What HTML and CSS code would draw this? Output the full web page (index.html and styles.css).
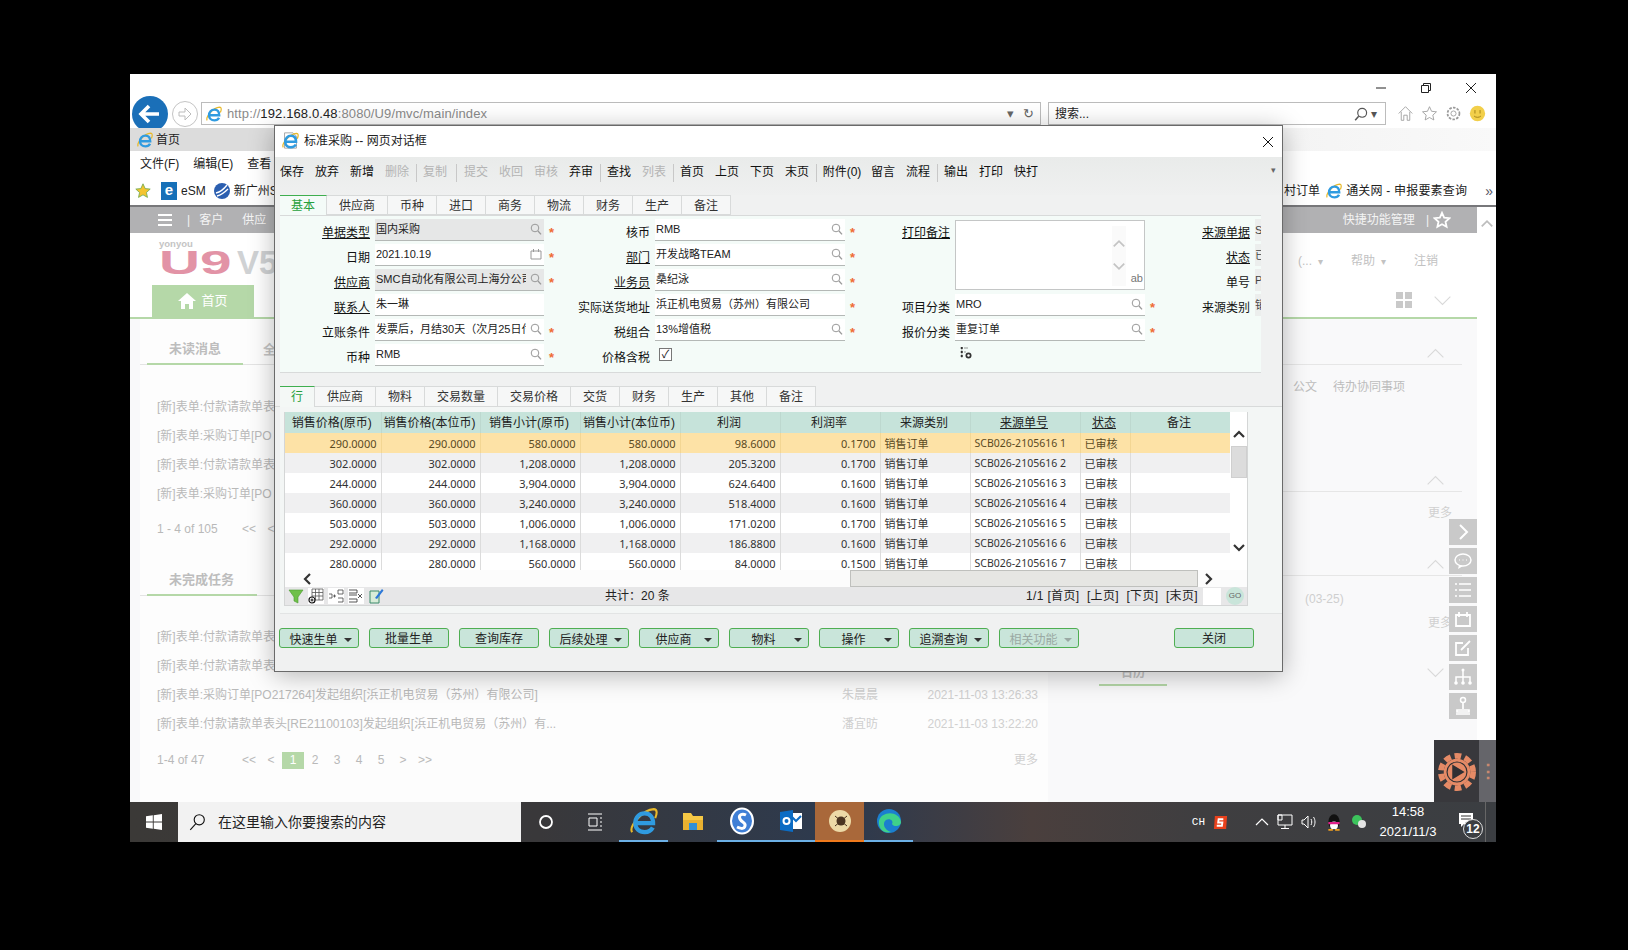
FILE: index.html
```html
<!DOCTYPE html>
<html lang="zh-CN">
<head>
<meta charset="utf-8">
<title>标准采购</title>
<link rel="stylesheet" href="styles.css">
</head>
<body>
<svg class="defs" aria-hidden="true">
  <defs>
    <symbol id="search" viewBox="0 0 12 12"><circle cx="5" cy="5" r="3.8" fill="none" stroke="currentColor"/><path d="M8 8l3 3.4" stroke="currentColor" stroke-width="1.3" fill="none"/></symbol>
    <symbol id="ie" viewBox="0 0 20 20"><path d="M1.500 18C-1 14 9 2 17 1.500c2.500 0 2.500 3 1 6.500" fill="none" stroke="#e8b92a" stroke-width="1.500"/><path d="M5 11.500h11.500C16.500 7 14 4.500 10.500 4.500 6.500 4.500 3.800 7.500 3.800 11.500s2.800 6.500 6.700 6.500c2.600 0 4.700-1.200 5.800-3.300" fill="none" stroke="#2f9be0" stroke-width="3"/></symbol>
    <symbol id="chev-up" viewBox="0 0 24 14"><path d="M2 12L12 2l10 10" fill="none" stroke="currentColor" stroke-width="1.4"/></symbol>
    <symbol id="chev-down" viewBox="0 0 24 14"><path d="M2 2l10 10L22 2" fill="none" stroke="currentColor" stroke-width="1.4"/></symbol>
  </defs>
</svg>
<div class="screen">
  <div class="caption">
    <svg class="cap-icon" viewBox="0 0 12 12"><path d="M1 6h10" stroke="#222"/></svg>
    <svg class="cap-icon" viewBox="0 0 12 12"><path d="M3.5 3.5V1.5h7v7h-2M1.500 3.500h7v7h-7z" fill="none" stroke="#222"/></svg>
    <svg class="cap-icon" viewBox="0 0 12 12"><path d="M1 1l10 10M11 1L1 11" stroke="#222"/></svg>
  </div>
  <div class="addr-row">
    <svg class="back" viewBox="0 0 36 36"><circle cx="18" cy="18" r="18" fill="#1a6fb8"/><path d="M27 18H10M17 10l-8 8 8 8" fill="none" stroke="#fff" stroke-width="3.600"/></svg>
    <svg class="forward" viewBox="0 0 26 26"><circle cx="13" cy="13" r="12.500" fill="#fff" stroke="#c4c4c4"/><path d="M7 11h6V7l6 6-6 6v-4H7z" fill="none" stroke="#bcbcbc"/></svg>
    <div class="addr">
      <svg class="addr-ie" viewBox="0 0 20 20"><use href="#ie"/></svg>
      <span class="url">http://<b>192.168.0.48</b>:8080/U9/mvc/main/index</span>
      <span class="addr-tail"><span>▾</span><span>↻</span></span>
    </div>
    <div class="search-box"><span>搜索...</span><span class="search-tail"><svg class="s14 flip" viewBox="0 0 12 12"><use href="#search"/></svg> ▾</span></div>
    <div class="ie-tools">
      <svg class="tool" viewBox="0 0 20 20"><path d="M2 10l8-8 8 8M5 8v10h3v-6h4v6h3V8" fill="none" stroke="#9a9a9a"/></svg>
      <svg class="tool" viewBox="0 0 20 20"><path d="M10 2l2.400 5.400 5.800.6-4.300 3.900 1.200 5.700-5.100-2.900-5.100 2.900 1.200-5.700L1.800 8l5.800-.6z" fill="none" stroke="#9a9a9a"/></svg>
      <svg class="tool" viewBox="0 0 20 20"><circle cx="10" cy="10" r="3" fill="none" stroke="#9a9a9a"/><circle cx="10" cy="10" r="7" fill="none" stroke="#9a9a9a" stroke-dasharray="3 1.500" stroke-width="2"/></svg>
      <svg class="tool" viewBox="0 0 20 20"><circle cx="10" cy="10" r="9" fill="#f2cf4a"/><path d="M7 6v4M13 6v4M6 13c2 2 6 2 8 0" stroke="#9a7a10" fill="none"/></svg>
    </div>
  </div>
  <div class="tab-row"><div class="ie-tab"><svg class="s16" viewBox="0 0 20 20"><use href="#ie"/></svg><span>首页</span></div></div>
  <div class="menu-row"><span>文件(F)</span><span>编辑(E)</span><span>查看</span></div>
  <div class="fav-row">
    <svg class="s16" viewBox="0 0 20 20"><path d="M10 1l2.700 6 6.300.6-4.700 4.300 1.300 6.100-5.600-3.200L4.400 18l1.300-6.100L1 7.600 7.300 7z" fill="#f4c430" stroke="#6aa84f"/></svg>
    <i class="esm">e</i><span class="fav-text">eSM</span>
    <svg class="s16 globe" viewBox="0 0 16 16"><circle cx="8" cy="8" r="8" fill="#2c5fb0"/><path d="M2 10c4-1 8-4 11-8M3 13c4-1 8-4 11-7" stroke="#fff" fill="none" stroke-width="1.300"/></svg>
    <span class="fav-text">新广州S</span>
    <span class="fav-spacer"></span>
    <span class="fav-text">村订单</span>
    <svg class="s16 fav-ie" viewBox="0 0 20 20"><use href="#ie"/></svg>
    <span class="fav-text wide">通关网 - 申报要素查询</span>
    <span class="fav-more">»</span>
  </div>

  <div class="page">
    <div class="page-main">
      <div class="topbar">
        <svg class="burger" viewBox="0 0 14 14"><path d="M0 2h14M0 7h14M0 12h14" stroke="#fff" stroke-width="2"/></svg>
        <span class="bar-sep">|</span><span>客户</span><span>供应</span>
        <span class="top-spacer"></span>
        <span>快捷功能管理</span><span class="bar-sep r">|</span>
        <svg class="s18" viewBox="0 0 20 20"><path d="M10 2l2.400 5.400 5.800.6-4.300 3.900 1.200 5.700-5.100-2.900-5.100 2.900 1.200-5.700L1.800 8l5.800-.6z" fill="none" stroke="#fff" stroke-width="2"/></svg>
      </div>
      <div class="logo-row">
        <div class="logo"><span class="yonyou">yonyou</span><span class="u9">U9</span><span class="v5">V5</span></div>
        <div class="user-menu"><span>(...<i class="mini">▾</i></span><span>帮助<i class="mini">▾</i></span><span>注销</span></div>
      </div>
      <div class="nav-row">
        <div class="home-tab"><svg class="s18" viewBox="0 0 18 18"><path d="M9 1l9 8h-3v8h-4v-5H7v5H3V9H0z" fill="#fff"/></svg><span>首页</span></div>
        <div class="nav-tools">
          <svg class="grid-ico" viewBox="0 0 16 16"><path d="M0 0h7v7H0zM9 0h7v7H9zM0 9h7v7H0zM9 9h7v7H9z" fill="#c9c9c9"/></svg>
          <svg class="chev" viewBox="0 0 24 14"><use href="#chev-down"/></svg>
        </div>
      </div>
      <div class="panels">
        <div class="left-panel">
          <div class="p-head"><span class="p-tab t1">未读消息</span><span class="p-tab2">全</span></div>
          <div class="p-list first">
            <div class="p-row"><span class="p-title">[新]表单:付款请款单表</span></div>
            <div class="p-row"><span class="p-title">[新]表单:采购订单[PO</span></div>
            <div class="p-row"><span class="p-title">[新]表单:付款请款单表</span></div>
            <div class="p-row"><span class="p-title">[新]表单:采购订单[PO</span></div>
          </div>
          <div class="pager"><span class="pg-info">1 - 4 of 105</span><span class="pg">&lt;&lt;</span><span class="pg">&lt;</span></div>
          <div class="p-head second"><span class="p-tab t2">未完成任务</span></div>
          <div class="p-list">
            <div class="p-row"><span class="p-title">[新]表单:付款请款单表</span></div>
            <div class="p-row"><span class="p-title">[新]表单:付款请款单表</span></div>
            <div class="p-row"><span class="p-title">[新]表单:采购订单[PO217264]发起组织[浜正机电贸易（苏州）有限公司]</span><span class="p-author">朱晨晨</span><span class="p-date">2021-11-03 13:26:33</span></div>
            <div class="p-row"><span class="p-title">[新]表单:付款请款单表头[RE21100103]发起组织[浜正机电贸易（苏州）有...</span><span class="p-author">潘宜昉</span><span class="p-date">2021-11-03 13:22:20</span></div>
          </div>
          <div class="pager second">
            <span class="pg-info">1-4 of 47</span><span class="pg">&lt;&lt;</span><span class="pg">&lt;</span><span class="pg on">1</span><span class="pg">2</span><span class="pg">3</span><span class="pg">4</span><span class="pg">5</span><span class="pg">&gt;</span><span class="pg">&gt;&gt;</span>
            <span class="pg-more">更多</span>
          </div>
        </div>
        <div class="right-panel">
          <div class="sec s1"><div class="sec-head"><svg class="chev" viewBox="0 0 24 14"><use href="#chev-up"/></svg></div><div class="sec-tags"><span>公文</span><span>待办协同事项</span></div></div>
          <div class="sec s2"><div class="sec-head"><svg class="chev" viewBox="0 0 24 14"><use href="#chev-up"/></svg></div><div class="sec-more">更多</div></div>
          <div class="sec s3"><div class="sec-head"><svg class="chev" viewBox="0 0 24 14"><use href="#chev-up"/></svg></div><div class="sec-date">(03-25)</div><div class="sec-more">更多</div></div>
          <div class="sec-cal"><span class="cal-tab">日历</span><svg class="chev" viewBox="0 0 24 14"><use href="#chev-down"/></svg></div>
        </div>
      </div>
    </div>
    <div class="page-scroll"><svg class="chev" viewBox="0 0 24 14"><path d="M3 12L12 3l9 9" fill="none" stroke="#bdbdbd" stroke-width="3"/></svg></div>
  </div>

  <div class="side-tools">
    <span class="side-btn"><svg viewBox="0 0 20 20"><path d="M7 3l7 7-7 7" fill="none" stroke="#fff" stroke-width="2"/></svg></span>
    <span class="side-btn"><svg viewBox="0 0 20 20"><ellipse cx="10" cy="9" rx="8" ry="6" fill="none" stroke="#fff" stroke-width="1.500"/><path d="M6 14l-1 4 5-3" fill="#fff"/><path d="M6 9h1M9.500 9h1M13 9h1" stroke="#fff"/></svg></span>
    <span class="side-btn"><svg viewBox="0 0 20 20"><path d="M2 4h2M6 4h12M2 10h2M6 10h12M2 16h2M6 16h12" stroke="#fff" stroke-width="1.500"/></svg></span>
    <span class="side-btn"><svg viewBox="0 0 20 20"><path d="M3 6h14v11H3zM6 3v5M14 3v5" fill="none" stroke="#fff" stroke-width="1.800"/></svg></span>
    <span class="side-btn"><svg viewBox="0 0 20 20"><path d="M10 5H3v12h12v-7M8 12l9-9" fill="none" stroke="#fff" stroke-width="1.800"/></svg></span>
    <span class="side-btn"><svg viewBox="0 0 20 20"><path d="M10 3v7M3 16v-6h14v6M10 10v6" fill="none" stroke="#fff" stroke-width="1.500"/><circle cx="10" cy="3" r="1.500" fill="#fff"/><circle cx="3" cy="16" r="1.800" fill="#fff"/><circle cx="10" cy="16" r="1.800" fill="#fff"/><circle cx="17" cy="16" r="1.800" fill="#fff"/></svg></span>
    <span class="side-btn"><svg viewBox="0 0 20 20"><circle cx="10" cy="4" r="2.500" fill="none" stroke="#fff" stroke-width="1.500"/><path d="M10 7v6M4 14h12v2H4zM3 18h14" stroke="#fff" stroke-width="1.700" fill="none"/></svg></span>
  </div>

  <div class="rec">
    <svg class="rec-sun" viewBox="0 0 40 40"><circle cx="20" cy="20" r="17" fill="none" stroke="#e58a66" stroke-width="6" stroke-dasharray="7 4"/><circle cx="20" cy="20" r="14" fill="#e58a66"/><circle cx="20" cy="20" r="10.500" fill="none" stroke="#2f2f33" stroke-width="1.200"/><path d="M15 12l13 8-13 8z" fill="#2f2f33"/></svg>
    <span class="rec-strip">⋮</span>
  </div>

  <div class="taskbar">
    <div class="start"><svg class="s16" viewBox="0 0 16 16"><path d="M0 2.300l6.800-1v6.300H0zM7.700 1.200L16 0v7.600H7.700zM0 8.400h6.800v6.300L0 13.700zM7.700 8.400H16V16l-8.300-1.200z" fill="#fff"/></svg></div>
    <div class="tsearch"><svg class="s18 ts-ico" viewBox="0 0 16 16"><circle cx="10" cy="6" r="4.500" fill="none" stroke="#111"/><path d="M7 9.500L2 15" stroke="#111"/></svg><span>在这里输入你要搜索的内容</span></div>
    <div class="tb-sys"><svg class="s16" viewBox="0 0 16 16"><circle cx="8" cy="8" r="6" fill="none" stroke="#fff" stroke-width="1.800"/></svg></div>
    <div class="tb-sys"><svg class="s18" viewBox="0 0 18 18"><path d="M2 1h14M2 17h14M3 5h8v8H3zM14 5h2M14 9h2M14 13h2" fill="none" stroke="#fff"/></svg></div>
    <div class="tb-app run"><svg class="s28" viewBox="0 0 20 20"><use href="#ie"/></svg></div>
    <div class="tb-app"><svg class="s24" viewBox="0 0 24 24"><path d="M2 4h8l2 3h10v14H2z" fill="#f6c945"/><path d="M2 11h20v10H2z" fill="#e8b030"/><path d="M8 14h8v7H8z" fill="#2f8fd8"/></svg></div>
    <div class="tb-app run"><svg class="s28" viewBox="0 0 28 28"><ellipse cx="14" cy="14" rx="11" ry="12.500" fill="#3f7fd6" stroke="#fff" stroke-width="2"/><path d="M18 8c-4-2-8 0-6 4s6 3 5 7-6 2-8 1" fill="none" stroke="#fff" stroke-width="3"/></svg></div>
    <div class="tb-app run"><svg class="s24" viewBox="0 0 24 24"><path d="M10 4h13v16H10z" fill="#fff"/><path d="M13 8l4 4 5-5" fill="none" stroke="#0b6cc4" stroke-width="2"/><path d="M1 3l13-2v22L1 21z" fill="#0b6cc4"/><circle cx="7.500" cy="12" r="3" fill="none" stroke="#fff" stroke-width="2"/></svg></div>
    <div class="tb-app active"><svg class="s28" viewBox="0 0 28 28"><circle cx="14" cy="14" r="11" fill="#ecd9a6"/><circle cx="15" cy="14" r="4.500" fill="#4a3420"/><path d="M9 9l12 10M21 9L9 19" stroke="#4a3420"/></svg></div>
    <div class="tb-app run"><svg class="s28" viewBox="0 0 28 28"><circle cx="14" cy="14" r="12" fill="#1b7fcf"/><path d="M4 14C6 4 24 3 26 15c0 5-8 5-9 2 2-3-2-6-6-4-4 3-2 10 5 12C8 27 3 21 4 14z" fill="#3fd18a"/></svg></div>
    <span class="tb-spacer"></span>
    <span class="ch">CH</span>
    <svg class="tray-s" viewBox="0 0 16 16"><path d="M2 1h13l-1 14H1z" fill="#e8411c"/><path d="M11 4.500H6L5.500 8h4.500l-.5 3.500H4" fill="none" stroke="#fff" stroke-width="2"/></svg>
    <svg class="tray up" viewBox="0 0 14 14"><path d="M1 10l6-6 6 6" fill="none" stroke="#fff" stroke-width="1.200"/></svg>
    <svg class="tray" viewBox="0 0 16 16"><path d="M1 1h14v10H1zM8 11v3M4 14.500h8M1 1h4v5H1z" fill="none" stroke="#fff"/></svg>
    <svg class="tray" viewBox="0 0 16 16"><path d="M1 6h2l4-4v12l-4-4H1zM10 5c1 2 1 4 0 6M12.500 3c2 3 2 7 0 10" fill="none" stroke="#fff"/></svg>
    <svg class="tray qq" viewBox="0 0 16 16"><ellipse cx="8" cy="8" rx="5" ry="7" fill="#111"/><ellipse cx="8" cy="11" rx="3.500" ry="3.500" fill="#fff"/><path d="M3 8h10v2H3z" fill="#e0208a"/><path d="M3 15h4M9 15h4" stroke="#f0a020" stroke-width="1.500"/></svg>
    <svg class="tray" viewBox="0 0 16 16"><circle cx="6" cy="6" r="5" fill="#3cc35c"/><circle cx="11" cy="10" r="4" fill="#e4e4e4"/></svg>
    <div class="clock"><span>14:58</span><span>2021/11/3</span></div>
    <div class="notify"><svg class="s16" viewBox="0 0 16 16"><path d="M1 1h14v11H6l-3 3v-3H1z" fill="#fff"/><path d="M3 4h10M3 7h10" stroke="#333"/></svg><span class="notify-n">12</span></div>
  </div>

  <div class="dialog">
    <div class="d-title">
      <svg class="d-ie" viewBox="0 0 20 20"><path d="M3 1h10l4 4v14H3z" fill="#fff" stroke="#999"/><use href="#ie"/></svg>
      <span>标准采购 -- 网页对话框</span>
      <svg class="d-close" viewBox="0 0 12 12"><path d="M1 1l10 10M11 1L1 11" stroke="#111"/></svg>
    </div>
    <div class="toolbar">
      <span class="tb">保存</span><span class="tb">放弃</span><span class="tb">新增</span><span class="tb off">删除</span><i class="tb-sep"></i>
      <span class="tb off">复制</span><i class="tb-sep wide"></i><span class="tb off">提交</span><span class="tb off">收回</span><span class="tb off">审核</span><span class="tb">弃审</span><i class="tb-sep"></i>
      <span class="tb">查找</span><span class="tb off">列表</span><i class="tb-sep"></i>
      <span class="tb">首页</span><span class="tb">上页</span><span class="tb">下页</span><span class="tb">末页</span><i class="tb-sep"></i>
      <span class="tb att">附件(0)</span><span class="tb">留言</span><span class="tb">流程</span><i class="tb-sep"></i>
      <span class="tb">输出</span><span class="tb">打印</span><span class="tb">快打</span>
      <span class="tb-drop">▾</span>
    </div>
    <div class="tabs">
      <span class="tab on t-main">基本</span><span class="tab t-3">供应商</span><span class="tab">币种</span><span class="tab">进口</span><span class="tab">商务</span><span class="tab">物流</span><span class="tab">财务</span><span class="tab">生产</span><span class="tab">备注</span>
    </div>
    <div class="form">
      <label class="f-l"><u>单据类型</u></label><div class="f-i ro"><span>国内采购</span><svg class="mag" viewBox="0 0 12 12"><use href="#search"/></svg></div><span class="star">*</span>
      <label class="f-l">核币</label><div class="f-i"><span>RMB</span><svg class="mag" viewBox="0 0 12 12"><use href="#search"/></svg></div><span class="star">*</span>
      <label class="f-l"><u>打印备注</u></label>
      <div class="memo"><div class="memo-bar"><svg viewBox="0 0 24 14"><path d="M3 12l9-9 9 9" fill="none" stroke="#c4c4c4" stroke-width="3"/></svg><svg viewBox="0 0 24 14"><path d="M3 2l9 9 9-9" fill="none" stroke="#c4c4c4" stroke-width="3"/></svg></div><span class="memo-ab">ab</span></div><span></span>
      <label class="f-l"><u>来源单据</u></label><div class="f-i clip"><span>S</span></div>

      <label class="f-l">日期</label><div class="f-i"><span>2021.10.19</span><svg class="mag" viewBox="0 0 12 12"><path d="M1 3h10v8H1zM3.500 1v3M8.500 1v3" fill="none" stroke="currentColor"/></svg></div><span class="star">*</span>
      <label class="f-l"><u>部门</u></label><div class="f-i"><span>开发战略TEAM</span><svg class="mag" viewBox="0 0 12 12"><use href="#search"/></svg></div><span class="star">*</span>
      <label class="f-l c3-gap"></label>
      <label class="f-l c4"><u>状态</u></label><div class="f-i clip"><span>已</span></div>

      <label class="f-l"><u>供应商</u></label><div class="f-i ro"><span>SMC自动化有限公司上海分公司</span><svg class="mag" viewBox="0 0 12 12"><use href="#search"/></svg></div><span class="star">*</span>
      <label class="f-l"><u>业务员</u></label><div class="f-i"><span>桑纪泳</span><svg class="mag" viewBox="0 0 12 12"><use href="#search"/></svg></div><span class="star">*</span>
      <label class="f-l c3-gap"></label>
      <label class="f-l c4">单号</label><div class="f-i clip"><span>P</span></div>

      <label class="f-l"><u>联系人</u></label><div class="f-i"><span>朱一琳</span></div><span></span>
      <label class="f-l">实际送货地址</label><div class="f-i"><span>浜正机电贸易（苏州）有限公司</span></div><span class="star">*</span>
      <label class="f-l">项目分类</label><div class="f-i"><span>MRO</span><svg class="mag" viewBox="0 0 12 12"><use href="#search"/></svg></div><span class="star">*</span>
      <label class="f-l">来源类别</label><div class="f-i clip"><span>销</span></div>

      <label class="f-l">立账条件</label><div class="f-i"><span>发票后，月结30天（次月25日付款）</span><svg class="mag" viewBox="0 0 12 12"><use href="#search"/></svg></div><span class="star">*</span>
      <label class="f-l">税组合</label><div class="f-i"><span>13%增值税</span><svg class="mag" viewBox="0 0 12 12"><use href="#search"/></svg></div><span class="star">*</span>
      <label class="f-l">报价分类</label><div class="f-i"><span>重复订单</span><svg class="mag" viewBox="0 0 12 12"><use href="#search"/></svg></div><span class="star">*</span>
      <span></span><span></span>

      <label class="f-l">币种</label><div class="f-i"><span>RMB</span><svg class="mag" viewBox="0 0 12 12"><use href="#search"/></svg></div><span class="star">*</span>
      <label class="f-l">价格含税</label><div class="f-check"><span class="check">✓</span></div><span></span>
      <span></span><div class="f-tool"><svg class="s12" viewBox="0 0 12 12"><path d="M1 0h1.500v2H1zM4 1h4M1 4h1.500v2H1zM4 5h2M1 8h1.500v2H1z" fill="#333" stroke="#333" stroke-width=".5"/><circle cx="8.500" cy="8.500" r="3" fill="#333"/><circle cx="8.500" cy="8.500" r="1.200" fill="#fff"/></svg></div>
    </div>

    <div class="gtabs">
      <span class="gtab on g-1">行</span><span class="gtab g-3">供应商</span><span class="gtab">物料</span><span class="gtab g-4">交易数量</span><span class="gtab g-4">交易价格</span><span class="gtab">交货</span><span class="gtab">财务</span><span class="gtab">生产</span><span class="gtab">其他</span><span class="gtab">备注</span>
    </div>
    <div class="grid-panel">
      <div class="grid">
        <div class="grid-main">
          <div class="grid-body">
            <table class="tbl">
              <colgroup><col class="c96"><col class="c99"><col class="c100"><col class="c100"><col class="c100"><col class="c100"><col class="c90"><col class="c110"><col class="c50"><col class="c100"></colgroup>
              <thead><tr><th>销售价格(原币)</th><th>销售价格(本位币)</th><th>销售小计(原币)</th><th>销售小计(本位币)</th><th>利润</th><th>利润率</th><th>来源类别</th><th><u>来源单号</u></th><th><u>状态</u></th><th>备注</th></tr></thead>
              <tbody>
                <tr class="sel"><td class="n">290.0000</td><td class="n">290.0000</td><td class="n">580.0000</td><td class="n">580.0000</td><td class="n">98.6000</td><td class="n">0.1700</td><td class="t">销售订单</td><td class="t code">SCB026-2105616 1</td><td class="t">已审核</td><td></td></tr>
                <tr class="alt"><td class="n">302.0000</td><td class="n">302.0000</td><td class="n">1,208.0000</td><td class="n">1,208.0000</td><td class="n">205.3200</td><td class="n">0.1700</td><td class="t">销售订单</td><td class="t code">SCB026-2105616 2</td><td class="t">已审核</td><td></td></tr>
                <tr><td class="n">244.0000</td><td class="n">244.0000</td><td class="n">3,904.0000</td><td class="n">3,904.0000</td><td class="n">624.6400</td><td class="n">0.1600</td><td class="t">销售订单</td><td class="t code">SCB026-2105616 3</td><td class="t">已审核</td><td></td></tr>
                <tr class="alt"><td class="n">360.0000</td><td class="n">360.0000</td><td class="n">3,240.0000</td><td class="n">3,240.0000</td><td class="n">518.4000</td><td class="n">0.1600</td><td class="t">销售订单</td><td class="t code">SCB026-2105616 4</td><td class="t">已审核</td><td></td></tr>
                <tr><td class="n">503.0000</td><td class="n">503.0000</td><td class="n">1,006.0000</td><td class="n">1,006.0000</td><td class="n">171.0200</td><td class="n">0.1700</td><td class="t">销售订单</td><td class="t code">SCB026-2105616 5</td><td class="t">已审核</td><td></td></tr>
                <tr class="alt"><td class="n">292.0000</td><td class="n">292.0000</td><td class="n">1,168.0000</td><td class="n">1,168.0000</td><td class="n">186.8800</td><td class="n">0.1600</td><td class="t">销售订单</td><td class="t code">SCB026-2105616 6</td><td class="t">已审核</td><td></td></tr>
                <tr><td class="n">280.0000</td><td class="n">280.0000</td><td class="n">560.0000</td><td class="n">560.0000</td><td class="n">84.0000</td><td class="n">0.1500</td><td class="t">销售订单</td><td class="t code">SCB026-2105616 7</td><td class="t">已审核</td><td></td></tr>
              </tbody>
            </table>
          </div>
          <div class="vscroll">
            <svg class="v-arrow" viewBox="0 0 14 10"><path d="M2 8l5-5 5 5" fill="none" stroke="#333" stroke-width="2.200"/></svg>
            <div class="v-thumb"></div>
            <svg class="v-arrow down" viewBox="0 0 14 10"><path d="M2 2l5 5 5-5" fill="none" stroke="#333" stroke-width="2.200"/></svg>
          </div>
        </div>
        <div class="hscroll">
          <svg class="h-arrow" viewBox="0 0 10 14"><path d="M8 2L3 7l5 5" fill="none" stroke="#333" stroke-width="2.200"/></svg>
          <div class="h-thumb"></div>
          <svg class="h-arrow r" viewBox="0 0 10 14"><path d="M2 2l5 5-5 5" fill="none" stroke="#333" stroke-width="2.200"/></svg>
        </div>
        <div class="gfoot">
          <svg class="gf-ico" viewBox="0 0 16 16"><path d="M1 2h14L10 9v6l-4-2V9z" fill="#6fc04a" stroke="#4a9a30" stroke-width=".6"/></svg>
          <svg class="gf-ico w" viewBox="0 0 16 16"><path d="M4 1h11v11H4zM4 4.500h11M4 8h11M7.500 1v11M11 1v11" fill="none" stroke="#555" stroke-width=".8"/><circle cx="4" cy="12" r="3" fill="#fff" stroke="#111" stroke-width="1.200"/><path d="M2.500 12h3M4 10.500v3" stroke="#111"/></svg>
          <svg class="gf-ico w" viewBox="0 0 16 16"><path d="M1 6h3v4H1M10 2h5v4h-5zM10 10h5v4h-5M5 8h3M6.500 6.500v3" fill="none" stroke="#444" stroke-width=".8"/></svg>
          <svg class="gf-ico w" viewBox="0 0 16 16"><path d="M1 2h8v3H1M1 7h8M1 11h8v3H1M10 6l4 4M14 6l-4 4" fill="none" stroke="#444" stroke-width=".9"/></svg>
          <svg class="gf-ico" viewBox="0 0 16 16"><path d="M2 3h9v12H2z" fill="#d8ecd8" stroke="#3a8a6a"/><path d="M7 10L14 1l1.500 1.500L9 11z" fill="#2c78d8"/></svg>
          <span class="gf-total">共计：20 条</span>
          <span class="gf-pages">1/1 [首页]&nbsp;&nbsp;[上页]&nbsp;&nbsp;[下页]&nbsp;&nbsp;[末页]</span>
          <span class="gf-input"></span>
          <span class="gf-go">GO</span>
        </div>
      </div>
    </div>
    <div class="actions">
      <div class="btn drop"><span>快速生单</span><i class="caret"></i></div>
      <div class="btn"><span>批量生单</span></div>
      <div class="btn"><span>查询库存</span></div>
      <div class="btn drop"><span>后续处理</span><i class="caret"></i></div>
      <div class="btn drop"><span>供应商</span><i class="caret"></i></div>
      <div class="btn drop"><span>物料</span><i class="caret"></i></div>
      <div class="btn drop"><span>操作</span><i class="caret"></i></div>
      <div class="btn drop"><span>追溯查询</span><i class="caret"></i></div>
      <div class="btn drop dim"><span>相关功能</span><i class="caret"></i></div>
      <div class="btn close"><span>关闭</span></div>
    </div>
  </div>
</div>
</body>
</html>
```

FILE: styles.css
```css
* { box-sizing: border-box; }
html { background: #000; }
body {
  margin: 0;
  padding: 74px 0 0 130px;
  height: 950px;
  overflow: hidden;
  background: #000;
  color: #222;
  font: 12px/16px "Liberation Sans", "Noto Sans CJK SC", sans-serif;
}
i { font-style: normal; }
.defs { position: absolute; width: 0; height: 0; }
.s12 { width: 12px; height: 12px; }
.s14 { width: 14px; height: 14px; }
.s16 { width: 16px; height: 16px; }
.s18 { width: 18px; height: 18px; }
.s24 { width: 24px; height: 24px; }
.s28 { width: 28px; height: 28px; }
.flip { transform: scaleX(-1); }

.screen {
  position: relative;
  width: 1366px;
  height: 768px;
  background: #fff;
  overflow: hidden;
  display: flex;
  flex-direction: column;
}

/* browser chrome */
.caption { height: 28px; display: flex; justify-content: flex-end; align-items: center; gap: 33px; padding: 0 19px 0 0; }
.cap-icon { width: 12px; height: 12px; }
.addr-row { height: 23px; display: flex; align-items: center; padding-left: 2px; }
.back { width: 36px; height: 36px; flex: none; }
.forward { width: 26px; height: 26px; flex: none; margin-left: 4px; }
.addr {
  margin-left: 3px; width: 840px; height: 23px; border: 1px solid #bcbcbc; background: #fff;
  display: flex; align-items: center; padding: 0 6px 0 4px; color: #8a8a8a; font-size: 13px;
}
.addr-ie { width: 16px; height: 16px; }
.url { margin-left: 5px; letter-spacing: .12px; }
.url b { font-weight: 400; color: #222; }
.addr-tail { margin-left: auto; color: #666; display: flex; gap: 9px; }
.search-box {
  margin-left: 7px; width: 338px; height: 23px; border: 1px solid #bcbcbc; background: #fff;
  display: flex; align-items: center; justify-content: space-between; padding: 0 8px 0 6px; font-size: 12px;
}
.search-tail { display: flex; align-items: center; gap: 3px; color: #555; }
.ie-tools { display: flex; gap: 7px; margin-left: 11px; align-items: center; }
.tool { width: 17px; height: 17px; }

.tab-row { height: 23px; margin-top: 3px; background: linear-gradient(90deg, #dcdcdc 0, #dcdcdc 150px, #f4f4f4 1160px, #f9f9f9 100%); }
.ie-tab { display: flex; align-items: center; gap: 3px; padding: 1px 0 0 7px; height: 23px; }
.menu-row { height: 25px; display: flex; align-items: center; gap: 14px; padding-left: 10px; background: #fff; }
.fav-row {
  height: 29px; display: flex; align-items: center; padding-left: 5px; background: #fff;
  border-bottom: 0;
}
.esm { width: 16px; height: 18px; margin-left: 10px; background: #1670b8; color: #fff; font-weight: 700; text-align: center; font-size: 15px; line-height: 16px; }
.fav-text { margin-left: 4px; }
.fav-text.wide { letter-spacing: .2px; }
.globe { margin-left: 8px; }
.fav-spacer { flex: 1; }
.fav-ie { margin-left: 6px; }
.fav-more { margin: 0 3px 0 18px; color: #556; font-size: 14px; }

/* page behind the dialog */
.page { flex: 1; display: flex; background: #f9f9fa; border-top: 2px solid #77777a; min-height: 0; }
.page-main { width: 1347px; display: flex; flex-direction: column; }
.page-scroll { flex: 1; background: #fff; padding-top: 9px; text-align: center; }
.page-scroll .chev { width: 14px; height: 9px; }
.topbar { height: 26px; background: #b1b1b3; color: #f4f4f4; display: flex; align-items: center; gap: 19px; padding: 0 26px 0 28px; flex: none; }
.burger { width: 14px; height: 14px; }
.bar-sep { margin: 0 -10px 0 -4px; }
.bar-sep.r { margin: 0 -15px 0 -8px; }
.top-spacer { flex: 1; }
.logo-row { height: 52px; display: flex; justify-content: space-between; background: #fff; flex: none; }
.logo { position: relative; padding-left: 29px; display: flex; align-items: flex-end; height: 46px; }
.yonyou { position: absolute; left: 29px; top: 5px; font-size: 9.500px; font-weight: 700; color: #c4c4c4; line-height: 12px; }
.u9 { display: inline-block; font: 700 33px/33px "Liberation Sans", sans-serif; color: #e293a6; transform: scaleX(1.72); transform-origin: 0 50%; width: 78px; }
.v5 { font: 700 33px/33px "Liberation Sans", sans-serif; color: #d0d2d4; }
.user-menu { display: flex; gap: 28px; padding: 20px 39px 0 0; color: #c2c2c2; }
.mini { margin-left: 6px; font-size: 10px; }
.nav-row { height: 34px; display: flex; justify-content: space-between; background: #fff; border-bottom: 2px solid #b5d8a8; padding-left: 22px; flex: none; }
.home-tab { width: 102px; height: 32px; background: #b5d8a8; color: #fff; display: flex; align-items: center; justify-content: center; gap: 5px; font-size: 13px; }
.nav-tools { display: flex; align-items: center; gap: 21px; padding: 0 25px 2px 0; }
.grid-ico { width: 16px; height: 16px; }
.chev { width: 19px; height: 11px; color: #d9d9d9; }
.panels { flex: 1; display: flex; min-height: 0; }
.left-panel { width: 908px; margin-left: 10px; background: #fdfdfd; }
.p-head { height: 46px; display: flex; align-items: flex-end; padding-left: 7px; color: #c4c4c4; font-size: 13px; font-weight: 700; border-bottom: 1px solid #e4e4e4; width: 300px; }
.p-tab { display: block; height: 31px; line-height: 30px; padding-left: 22px; border-bottom: 2px solid #b5d8a8; margin-bottom: -1px; color: #bdbdbd; }
.t1 { width: 96px; }
.t2 { width: 110px; }
.p-tab2 { padding: 0 0 6px 20px; }
.p-head.second { margin-top: 10px; }
.p-list { padding: 26px 10px 0 17px; }
.p-list.first { padding-top: 27px; }
.p-row { height: 29px; display: flex; align-items: center; color: #b9b9b9; }
.p-title { width: 685px; white-space: nowrap; overflow: hidden; }
.p-author { width: 60px; color: #cfcfcf; }
.p-date { margin-left: auto; color: #d0d0d0; }
.pager { display: flex; height: 22px; align-items: center; margin-top: 10px; padding-left: 17px; color: #b9b9b9; }
.pager.second { margin-top: 11px; padding-right: 10px; }
.pg-info { width: 81px; white-space: nowrap; }
.pg { width: 22px; height: 17px; line-height: 17px; text-align: center; }
.pg.on { background: #b5d8a8; color: #fff; }
.pg-more { margin-left: auto; color: #d0d0d0; }
.right-panel { width: 363px; margin-left: 51px; display: flex; flex-direction: column; }
.sec { position: relative; }
.sec-head { height: 46px; border-bottom: 1px solid #e6e6e6; display: flex; justify-content: flex-end; align-items: flex-end; padding: 0 17px 5px 0; }
.s1 { height: 127px; }
.s2 { height: 84px; }
.s3 { height: 110px; }
.sec-tags { display: flex; gap: 16px; padding: 14px 0 0 194px; color: #bdbdbd; }
.sec-more { text-align: right; padding: 13px 10px 0 0; color: #d0d0d0; }
.sec-date { padding: 15px 0 0 206px; color: #cfcfcf; height: 28px; }
.s3 .sec-more { padding-top: 11px; }
.sec-cal { height: 46px; display: flex; justify-content: space-between; align-items: flex-start; }
.cal-tab { width: 68px; text-align: center; color: #c4c4c4; font-weight: 700; height: 46px; border-bottom: 2px solid #b5d8a8; padding-top: 25px; }
.sec-cal .chev { margin: 27px 17px 0 0; }

.side-tools { position: absolute; left: 1319px; top: 445px; display: flex; flex-direction: column; gap: 3px; }
.side-btn { width: 28px; height: 26px; background: #c9c9c9; display: flex; align-items: center; justify-content: center; }
.side-btn svg { width: 20px; height: 20px; }
.rec { position: absolute; right: 0; top: 666px; width: 62px; height: 62px; background: #38383c; display: flex; }
.rec-sun { width: 38px; height: 38px; margin: 13px 0 0 4px; }
.rec-strip { margin-left: 3px; width: 17px; background: #65656a; color: #c98a70; text-align: center; line-height: 62px; font-size: 18px; font-weight: 700; }

/* taskbar */
.taskbar {
  height: 40px; flex: none; display: flex; align-items: center; color: #fff;
  background: linear-gradient(90deg, #3b3937 0, #39383a 30%, #2e3a4d 50%, #303a4c 54%, #4a3f3d 66%, #3f3e40 78%, #3b3e42 100%);
}
.start { width: 48px; display: flex; justify-content: center; }
.tsearch { width: 343px; height: 40px; background: #f2f2f2; color: #222; display: flex; align-items: center; font-size: 14px; gap: 12px; padding-left: 10px; }
.tb-sys { width: 49px; height: 40px; display: flex; align-items: center; justify-content: center; }
.tb-app { width: 49px; height: 40px; display: flex; align-items: center; justify-content: center; border-bottom: 2px solid transparent; }
.tb-app.run { border-bottom: 2px solid #6cb0e6; background-clip: padding-box; }
.tb-app.active { background: #a9683a; border-bottom: 2px solid #f07a1c; }
.tb-spacer { flex: 1; }
.ch { font: 11px/14px "Liberation Mono", monospace; margin-right: 8px; }
.tray-s { width: 15px; height: 17px; margin-right: 27px; }
.tray { width: 16px; height: 16px; margin-right: 8px; }
.tray.up { width: 14px; height: 14px; }
.tray.qq { width: 18px; height: 20px; }
.clock { width: 66px; margin: 0 6px 0 0; display: flex; flex-direction: column; align-items: center; line-height: 20px; font-size: 13px; }
.notify { position: relative; width: 39px; height: 40px; display: flex; align-items: center; justify-content: center; padding-bottom: 4px; margin-right: 10px; border-right: 1px solid #666; }
.notify-n { position: absolute; left: 16px; top: 17px; width: 20px; height: 20px; border-radius: 50%; background: #3b3e42; border: 1px solid #ddd; text-align: center; font-size: 12px; font-weight: 700; line-height: 18px; }

/* dialog */
.dialog {
  position: absolute; left: 144px; top: 51px; width: 1009px; height: 547px;
  background: #f0f1f1; border: 1px solid #6a6a6a; box-shadow: 0 4px 24px rgba(0, 0, 0, .28);
  display: flex; flex-direction: column;
}
.d-title { height: 31px; background: #fff; display: flex; align-items: center; padding: 0 8px 2px 7px; gap: 5px; flex: none; }
.d-ie { width: 17px; height: 17px; }
.d-close { width: 12px; height: 12px; margin: 2px 0 0 auto; }
.toolbar { height: 38px; flex: none; display: flex; align-items: flex-start; padding: 7px 0 0 0; background: linear-gradient(#e9ebea, #eff0f0); position: relative; color: #111; }
.tb { width: 35px; text-align: center; }
.tb:first-child { margin-left: -0.500px; }
.tb.off { color: #b4b4b4; }
.tb.att { width: 47px; margin: 0 0 0 1px; }
.tb-sep { width: 1px; height: 18px; background: #c8c8c8; margin: 0 .5px 0 1.500px; }
.tb-sep.wide { margin: 0 2px 0 3px; }
.tb-drop { position: absolute; right: 6px; top: 5px; font-size: 9px; color: #666; }
.tabs { height: 20px; flex: none; display: flex; margin-left: 5px; width: 981px; }
.tab { width: 49px; height: 20px; text-align: center; line-height: 21px; background: #f6f7f7; border: 1px solid #d8dada; border-left: 0; color: #333; }
.t-3 { width: 61px; }
.t-main { width: 47px; }
.tab.on { background: #f4fbf8; color: #27a03c; border: 0; border-top: 1px solid #3fae4f; border-right: 1px solid #d8dada; }
.form {
  height: 158px; flex: none; margin-left: 5px; width: 981px; background: #f4fbf8;
  border-top: 1px solid #d8dada; border-bottom: 1px solid #d8dada; margin-top: 0;
  display: grid;
  grid-template-columns: 95px 169px 31px 80px 190px 30px 80px 190px 30px 80px 6px;
  grid-auto-rows: 25px;
  align-items: end;
}
.f-l { padding-right: 5px; text-align: right; color: #111; height: 21px; line-height: 21px; white-space: nowrap; margin-bottom: -3px; }
.f-i {
  height: 22px; border-bottom: 1px solid #b4b8b6; background: #fff;
  display: flex; align-items: center; font-size: 11px; padding: 0 2px 1px 1px; color: #222; overflow: hidden; white-space: nowrap; position: relative;
}
.f-i > span { flex: 1; min-width: 0; overflow: hidden; }
.f-i.ro { background: #e6e7e7; }
.f-i.clip { background: #eceeed; padding: 0; border: 0; color: #444; }
.mag { width: 12px; height: 12px; color: #999; flex: none; margin-left: 4px; }
.star { color: #ef6c35; padding: 0 0 1px 5px; font-size: 13px; line-height: 14px; font-weight: 700; }
.memo { grid-row: 1 / span 3; grid-column: 8; align-self: start; height: 70px; margin-top: 4px; border: 1px solid #c4c6c6; background: #fff; position: relative; }
.memo-bar { position: absolute; right: 18px; top: 5px; width: 14px; height: 60px; display: flex; flex-direction: column; gap: 14px; padding-top: 13px; background: #fafafa; }
.memo-bar svg { width: 14px; height: 9px; }
.memo-ab { position: absolute; right: 1px; bottom: 4px; font-size: 11px; color: #777; line-height: 14px; }
.c3-gap { display: none; }
.c4 { grid-column: 10; }
.f-check { height: 21px; padding-left: 4px; margin-bottom: -3px; }
.check { display: block; width: 13px; height: 13px; border: 1px solid #777; background: #fff; text-align: center; line-height: 11px; font-size: 11px; color: #111; }
.f-tool { height: 22px; padding-left: 5px; margin-bottom: -3px; }

.gtabs { height: 21px; margin-top: 13px; flex: none; display: flex; padding-left: 5px; border-bottom: 1px solid #d8dada; }
.gtab { width: 49px; height: 21px; text-align: center; line-height: 21px; background: #f6f7f7; border: 1px solid #d8dada; border-left: 0; color: #333; }
.gtab.on { background: #f4f8f6; color: #27a03c; border: 0; border-top: 1px solid #3fae4f; border-right: 1px solid #d8dada; }
.g-1 { width: 35px; }
.g-3 { width: 61px; }
.g-4 { width: 73px; }
.grid-panel { height: 207px; margin: 0 0 0 5px; padding: 5px 0 0 4px; flex: none; border-bottom: 1px solid #e2e4e4; background: #f3f6f5; }
.grid { width: 964px; height: 194px; border: 1px solid #d4d6d6; border-width: 0 1px 1px 1px; background: #fff; display: flex; flex-direction: column; }
.grid-main { height: 158px; display: flex; }
.grid-body { width: 945px; height: 158px; overflow: hidden; }
.tbl { width: 945px; table-layout: fixed; border-collapse: collapse; font: 11px/19px "Noto Sans", "Noto Sans CJK SC", sans-serif; color: #333; }
.c96 { width: 96px; }
.c99 { width: 99px; }
.c100 { width: 100px; }
.c90 { width: 90px; }
.c110 { width: 110px; }
.c50 { width: 50px; }
.tbl th { height: 21px; padding: 1px 2px 0 0; background: #c6e3da; color: #222; font: 400 12px/20px "Liberation Sans", "Noto Sans CJK SC", sans-serif; white-space: nowrap; border-right: 1px solid #bdd8cf; overflow: visible; }
.tbl td { height: 20px; padding: 1px 4px 0; white-space: nowrap; overflow: hidden; border-right: 1px solid #dcdcdc; }
.tbl td.n { text-align: right; }
.tbl td.t { text-align: left; }
.tbl td.code { font-size: 10.500px; }
.tbl .alt td { background: #f0f0f1; }
.tbl .sel td { background: #fde2a6; color: #5b4a1e; border-right-color: #f3d693; }
.vscroll { flex: 1; display: flex; flex-direction: column; align-items: center; background: #fff; padding-top: 17px; }
.v-arrow { width: 14px; height: 10px; flex: none; }
.v-thumb { width: 16px; height: 32px; background: #dcdcdc; margin-top: 7px; border: 1px solid #cfcfcf; flex: none; }
.v-arrow.down { margin-top: 65px; }
.hscroll { height: 17px; display: flex; align-items: center; padding-left: 17px; background: #fcfcfc; }
.h-arrow { width: 10px; height: 14px; flex: none; }
.h-thumb { margin-left: 538px; width: 348px; height: 17px; background: #e6e6e3; border: 1px solid #bfc0bd; }
.h-arrow.r { margin-left: 6px; }
.gfoot { flex: 1; display: flex; align-items: center; background: #e7e7e8; padding-left: 3px; position: relative; }
.gf-ico { width: 16px; height: 16px; margin-right: 4px; }
.gf-ico.w { background: #fff; }
.gf-total { margin-left: 217px; font-size: 12px; }
.gf-pages { margin-left: auto; font-size: 12px; white-space: nowrap; letter-spacing: .36px; }
.gf-input { width: 18px; height: 17px; background: #fff; margin: 0 5px; }
.gf-go { width: 18px; height: 18px; border-radius: 50%; background: #c9e5da; font-size: 8px; text-align: center; line-height: 18px; color: #666; margin-right: 3px; }

.actions { display: flex; gap: 10px; margin: 14px 28px 0 4px; }
.btn { width: 80px; height: 20px; border: 1px solid #4fae52; border-radius: 3px; background: #c9e5da; display: flex; align-items: center; justify-content: center; color: #222; padding: 2px 0 0 0; }
.btn.drop { justify-content: flex-start; padding: 4px 0 0 8px; }
.btn.drop span { flex: 1; text-align: center; }
.caret { width: 0; height: 0; border: 4px solid transparent; border-top: 4px solid #333; border-bottom: 0; margin: 0 6px 0 5px; }
.btn.dim { color: #9aa9a3; }
.btn.dim .caret { border-top-color: #9aa9a3; }
.btn.close { margin-left: auto; }
```
